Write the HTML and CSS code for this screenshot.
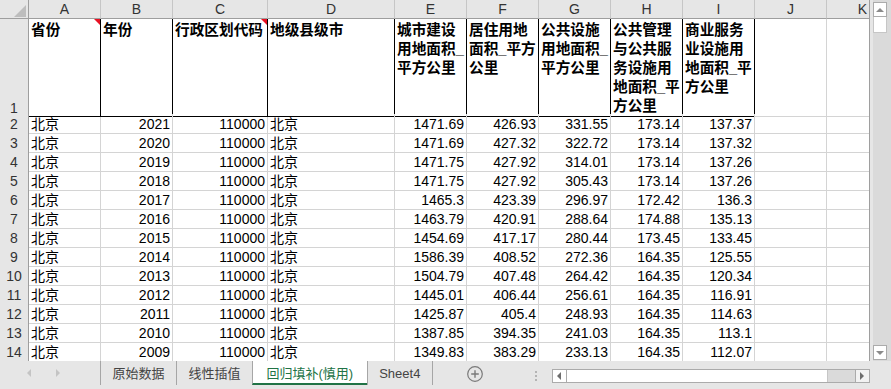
FILE: index.html
```html
<!DOCTYPE html>
<html lang="zh-CN">
<head>
    <meta charset="UTF-8">
    <title>回归填补(慎用)</title>
    <link rel="stylesheet" href="styles.css">
</head>
<body>
    <div class="app">
        <div class="main">
            <div class="sheet">
                <!-- column letters -->
                <div class="row head">
                    <div class="c corner"><span class="corner-tri"></span></div>
                    <div class="c">A</div><div class="c">B</div><div class="c">C</div><div class="c">D</div>
                    <div class="c">E</div><div class="c">F</div><div class="c">G</div><div class="c">H</div>
                    <div class="c">I</div><div class="c">J</div><div class="c">K</div>
                </div>

                <!-- row 1: field names -->
                <div class="row title">
                    <div class="c rh">1</div>
                    <div class="c box note">省份<span class="note-tri"></span></div>
                    <div class="c box">年份</div>
                    <div class="c box note">行政区划代码<span class="note-tri"></span></div>
                    <div class="c box">地级县级市</div>
                    <div class="c box">城市建设用地面积_平方公里</div>
                    <div class="c box">居住用地面积_平方公里</div>
                    <div class="c box">公共设施用地面积_平方公里</div>
                    <div class="c box">公共管理与公共服务设施用地面积_平方公里</div>
                    <div class="c box">商业服务业设施用地面积_平方公里</div>
                    <div class="c"></div>
                    <div class="c"></div>
                </div>

                <div class="row"><div class="c rh">2</div><div class="c">北京</div><div class="c n">2021</div><div class="c n">110000</div><div class="c">北京</div><div class="c n">1471.69</div><div class="c n">426.93</div><div class="c n">331.55</div><div class="c n">173.14</div><div class="c n">137.37</div><div class="c"></div><div class="c"></div></div>
                <div class="row"><div class="c rh">3</div><div class="c">北京</div><div class="c n">2020</div><div class="c n">110000</div><div class="c">北京</div><div class="c n">1471.69</div><div class="c n">427.32</div><div class="c n">322.72</div><div class="c n">173.14</div><div class="c n">137.32</div><div class="c"></div><div class="c"></div></div>
                <div class="row"><div class="c rh">4</div><div class="c">北京</div><div class="c n">2019</div><div class="c n">110000</div><div class="c">北京</div><div class="c n">1471.75</div><div class="c n">427.92</div><div class="c n">314.01</div><div class="c n">173.14</div><div class="c n">137.26</div><div class="c"></div><div class="c"></div></div>
                <div class="row"><div class="c rh">5</div><div class="c">北京</div><div class="c n">2018</div><div class="c n">110000</div><div class="c">北京</div><div class="c n">1471.75</div><div class="c n">427.92</div><div class="c n">305.43</div><div class="c n">173.14</div><div class="c n">137.26</div><div class="c"></div><div class="c"></div></div>
                <div class="row"><div class="c rh">6</div><div class="c">北京</div><div class="c n">2017</div><div class="c n">110000</div><div class="c">北京</div><div class="c n">1465.3</div><div class="c n">423.39</div><div class="c n">296.97</div><div class="c n">172.42</div><div class="c n">136.3</div><div class="c"></div><div class="c"></div></div>
                <div class="row"><div class="c rh">7</div><div class="c">北京</div><div class="c n">2016</div><div class="c n">110000</div><div class="c">北京</div><div class="c n">1463.79</div><div class="c n">420.91</div><div class="c n">288.64</div><div class="c n">174.88</div><div class="c n">135.13</div><div class="c"></div><div class="c"></div></div>
                <div class="row"><div class="c rh">8</div><div class="c">北京</div><div class="c n">2015</div><div class="c n">110000</div><div class="c">北京</div><div class="c n">1454.69</div><div class="c n">417.17</div><div class="c n">280.44</div><div class="c n">173.45</div><div class="c n">133.45</div><div class="c"></div><div class="c"></div></div>
                <div class="row"><div class="c rh">9</div><div class="c">北京</div><div class="c n">2014</div><div class="c n">110000</div><div class="c">北京</div><div class="c n">1586.39</div><div class="c n">408.52</div><div class="c n">272.36</div><div class="c n">164.35</div><div class="c n">125.55</div><div class="c"></div><div class="c"></div></div>
                <div class="row"><div class="c rh">10</div><div class="c">北京</div><div class="c n">2013</div><div class="c n">110000</div><div class="c">北京</div><div class="c n">1504.79</div><div class="c n">407.48</div><div class="c n">264.42</div><div class="c n">164.35</div><div class="c n">120.34</div><div class="c"></div><div class="c"></div></div>
                <div class="row"><div class="c rh">11</div><div class="c">北京</div><div class="c n">2012</div><div class="c n">110000</div><div class="c">北京</div><div class="c n">1445.01</div><div class="c n">406.44</div><div class="c n">256.61</div><div class="c n">164.35</div><div class="c n">116.91</div><div class="c"></div><div class="c"></div></div>
                <div class="row"><div class="c rh">12</div><div class="c">北京</div><div class="c n">2011</div><div class="c n">110000</div><div class="c">北京</div><div class="c n">1425.87</div><div class="c n">405.4</div><div class="c n">248.93</div><div class="c n">164.35</div><div class="c n">114.63</div><div class="c"></div><div class="c"></div></div>
                <div class="row"><div class="c rh">13</div><div class="c">北京</div><div class="c n">2010</div><div class="c n">110000</div><div class="c">北京</div><div class="c n">1387.85</div><div class="c n">394.35</div><div class="c n">241.03</div><div class="c n">164.35</div><div class="c n">113.1</div><div class="c"></div><div class="c"></div></div>
                <div class="row"><div class="c rh">14</div><div class="c">北京</div><div class="c n">2009</div><div class="c n">110000</div><div class="c">北京</div><div class="c n">1349.83</div><div class="c n">383.29</div><div class="c n">233.13</div><div class="c n">164.35</div><div class="c n">112.07</div><div class="c"></div><div class="c"></div></div>
            </div>

            <div class="vscroll">
                <div class="vtrack">
                    <div class="sbtn"><span class="tri-up"></span></div>
                    <div class="vthumb"></div>
                    <div class="vspace"></div>
                    <div class="sbtn"><span class="tri-down"></span></div>
                </div>
            </div>
        </div>

        <div class="tabbar">
            <div class="nav">
                <span class="nav-left"></span>
                <span class="nav-right"></span>
            </div>
            <div class="tabs">
                <div class="tab">原始数据</div>
                <div class="tab">线性插值</div>
                <div class="tab active">回归填补(慎用)</div>
                <div class="tab last">Sheet4</div>
            </div>
            <div class="add">
                <svg width="16" height="16" viewBox="0 0 16 16">
                    <circle cx="8" cy="8" r="7.3" fill="none" stroke="#7a7a7a" stroke-width="1.2"/>
                    <path d="M8 4.2v7.6M4.2 8h7.6" stroke="#7a7a7a" stroke-width="1.4"/>
                </svg>
            </div>
            <div class="grip"><i></i><i></i><i></i></div>
            <div class="hscroll">
                <div class="hbtn"><span class="tri-left"></span></div>
                <div class="hthumb"></div>
                <div class="hspace"></div>
                <div class="hbtn right"><span class="tri-right"></span></div>
            </div>
        </div>
    </div>
</body>
</html>
```

FILE: styles.css
```css
html, body {
    margin: 0;
    height: 100%;
    background: #e6e6e6;
    font-family: "Liberation Sans", "Noto Sans CJK SC", sans-serif;
    font-size: 14px;
    color: #000;
}

.app {
    width: 891px;
    height: 389px;
    display: flex;
    flex-direction: column;
    overflow: hidden;
}

.main {
    display: flex;
    height: 361px;
}

/* ---- grid ---- */

.sheet {
    box-sizing: border-box;
    width: 870px;
    height: 361px;
    border-right: 1px solid #9e9e9e;
    background: #fff;
    overflow: hidden;
}

.row {
    display: grid;
    grid-template-columns: 29px 72px 72px 95px 127px 72px 72px 72px 72px 72px 72px 72px;
    height: 19px;
}

.c {
    box-sizing: border-box;
    height: 100%;
    padding: 1px 2px 0;
    line-height: 18px;
    white-space: nowrap;
    border-right: 1px solid #d4d4d4;
    border-bottom: 1px solid #d4d4d4;
}

.c.n {
    text-align: right;
}

.row:last-child .c {
    border-bottom-color: #9e9e9e;
}

/* column letters */
.row.head .c {
    background: #e6e6e6;
    color: #333;
    text-align: center;
    padding: 0;
    border-right-color: #c6c6c6;
    border-bottom-color: #9e9e9e;
}

.row.head .corner {
    display: flex;
    justify-content: flex-end;
    align-items: flex-end;
    padding: 0 2px 1px 0;
    border-right-color: #9e9e9e;
}

.corner-tri {
    width: 0;
    height: 0;
    border-left: 12px solid transparent;
    border-bottom: 12px solid #bdbdbd;
}

/* row numbers */
.c.rh {
    background: #e6e6e6;
    color: #333;
    text-align: center;
    padding: 1px 0 0;
    border-right-color: #9e9e9e;
    border-bottom-color: #c6c6c6;
}

/* row 1 */
.row.title {
    height: 95px;
}

.row.title .c {
    white-space: normal;
    font-size: 14.67px;
    font-weight: bold;
    line-height: 19px;
    padding-top: 1.5px;
}

.row.title .c.rh {
    display: flex;
    align-items: flex-end;
    justify-content: center;
    font-size: 14px;
    font-weight: normal;
    line-height: 16px;
}

.c.box {
    border-right-color: #000;
    border-bottom-color: #000;
}

.note {
    position: relative;
}

.note-tri {
    position: absolute;
    top: 0;
    right: 0;
    width: 0;
    height: 0;
    border-left: 6px solid transparent;
    border-top: 6px solid #e81123;
}

/* ---- vertical scrollbar ---- */

.vscroll {
    width: 21px;
    padding-left: 3px;
    box-sizing: border-box;
    background: #e6e6e6;
}

.vtrack {
    box-sizing: border-box;
    width: 18px;
    height: 100%;
    padding: 2px 0 1px;
    background: #dadada;
    display: flex;
    flex-direction: column;
}

.sbtn {
    box-sizing: border-box;
    width: 14px;
    height: 15px;
    background: #fff;
    border: 1px solid #ababab;
    display: flex;
    align-items: center;
    justify-content: center;
}

.vthumb {
    box-sizing: border-box;
    width: 14px;
    height: 16px;
    background: #fff;
    border: 1px solid #c6c6c6;
    border-top: none;
}

.vspace {
    flex: 1;
}

.tri-up, .tri-down {
    width: 0;
    height: 0;
    border-left: 4px solid transparent;
    border-right: 4px solid transparent;
}

.tri-up {
    border-bottom: 4px solid #8a8a8a;
}

.tri-down {
    border-top: 4px solid #8a8a8a;
}

/* ---- sheet tabs ---- */

.tabbar {
    height: 28px;
    display: flex;
    align-items: flex-start;
    background: #e6e6e6;
}

.nav {
    width: 100px;
    height: 24px;
    display: flex;
    align-items: center;
    gap: 25px;
    padding-left: 27px;
    box-sizing: border-box;
}

.nav-left, .nav-right {
    width: 0;
    height: 0;
    border-top: 4px solid transparent;
    border-bottom: 4px solid transparent;
}

.nav-left {
    border-right: 4px solid #c4c4c4;
}

.nav-right {
    border-left: 4px solid #c4c4c4;
}

.tabs {
    display: flex;
}

.tab {
    padding: 3px 11.5px 2px;
    line-height: 19px;
    font-size: 13px;
    color: #444;
    border-left: 1px solid #a6a6a6;
}

.tab.last {
    border-right: 1px solid #a6a6a6;
}

.tab.active {
    background: #fff;
    color: #217346;
    padding: 3px 13.5px 0;
    border-bottom: 2px solid #217346;
}

.add {
    width: 16px;
    height: 16px;
    margin: 5px 0 0 34px;
}

.add svg {
    display: block;
}

.grip {
    display: flex;
    flex-direction: column;
    gap: 2px;
    margin: 10px 0 0 52px;
}

.grip i {
    display: block;
    width: 2px;
    height: 2px;
    background: #b4b4b4;
}

/* ---- horizontal scrollbar ---- */

.hscroll {
    box-sizing: border-box;
    width: 318px;
    height: 14px;
    margin: 8px 0 0 15px;
    border: 1px solid #ababab;
    background: #dadada;
    display: flex;
}

.hbtn {
    width: 13px;
    background: #fff;
    border-right: 1px solid #ababab;
    display: flex;
    align-items: center;
    justify-content: center;
}

.hbtn.right {
    background: #f2f2f2;
    border-right: none;
    border-left: 1px solid #ababab;
}

.hthumb {
    width: 260px;
    background: #fff;
    border-right: 1px solid #c6c6c6;
}

.hspace {
    flex: 1;
}

.tri-left, .tri-right {
    width: 0;
    height: 0;
    border-top: 4px solid transparent;
    border-bottom: 4px solid transparent;
}

.tri-left {
    border-right: 4px solid #6d6d6d;
}

.tri-right {
    border-left: 4px solid #6d6d6d;
}
```
